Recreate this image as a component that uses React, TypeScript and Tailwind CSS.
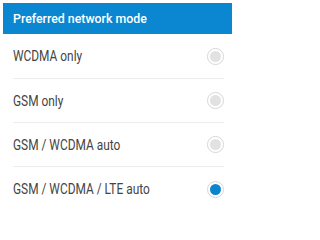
import React from "react";

const items = [
  { label: "WCDMA only", selected: false },
  { label: "GSM only", selected: false },
  { label: "GSM / WCDMA auto", selected: false },
  { label: "GSM / WCDMA / LTE auto", selected: true },
];

function Radio({ selected }: { selected: boolean }) {
  return (
    <div className="w-[17px] h-[17px] rounded-full border border-[#d6d6d6] bg-white flex items-center justify-center">
      <div
        className={
          selected
            ? "w-[11px] h-[11px] rounded-full bg-[#0a84d0]"
            : "w-[11px] h-[11px] rounded-full bg-[#e2e2e2]"
        }
      />
    </div>
  );
}

export default function App() {
  return (
    <div
      className="w-[236px] h-[214px] bg-white overflow-hidden pt-[3px]"
      style={{ fontFamily: 'Roboto, "Noto Sans", sans-serif' }}
    >
      <div className="ml-[3px] mr-[4px] h-[31px] bg-[#0a87d0] flex items-center pl-[10px]">
        <span className="text-white text-[13px] font-medium leading-none whitespace-nowrap origin-left scale-x-[0.95]">
          Preferred network mode
        </span>
      </div>
      <div className="ml-[13px] mr-[12px]">
        {items.map((it, i) => (
          <div
            key={it.label}
            className={
              (i === 0 ? "h-[45px] " : "h-[44px] ") +
              (i < items.length - 1 ? "border-b border-[#ececec] " : "") +
              "flex items-center justify-between"
            }
          >
            <span className="text-[14px] text-[#444444] leading-none whitespace-nowrap origin-left scale-x-[0.85]">
              {it.label}
            </span>
            <Radio selected={it.selected} />
          </div>
        ))}
      </div>
    </div>
  );
}
